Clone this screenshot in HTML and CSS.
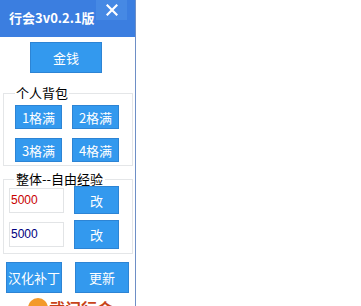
FILE: index.html
```html
<!DOCTYPE html>
<html>
<head>
<meta charset="utf-8">
<link rel="stylesheet" href="styles.css">
</head>
<body>
<div class="window">
  <div class="titlebar">
    <span class="title">行会3v0.2.1版</span>
    <span class="close"><svg width="12" height="12" viewBox="0 0 12 12"><path d="M1.5 1.5 L10.5 10.5 M10.5 1.5 L1.5 10.5" stroke="#ffffff" stroke-width="2.2" stroke-linecap="square"/></svg></span>
  </div>
  <div class="body">
    <div class="row-money"><button class="btn money">金钱</button></div>
    <fieldset class="group g1">
      <legend>个人背包</legend>
      <div class="grid">
        <button class="btn cell">1格满</button>
        <button class="btn cell">2格满</button>
        <button class="btn cell">3格满</button>
        <button class="btn cell">4格满</button>
      </div>
    </fieldset>
    <fieldset class="group g2">
      <legend>整体--自由经验</legend>
      <div class="exp-row">
        <div class="input red">5000</div>
        <button class="btn edit">改</button>
      </div>
      <div class="exp-row">
        <div class="input navy">5000</div>
        <button class="btn edit">改</button>
      </div>
    </fieldset>
    <div class="bottom">
      <button class="btn big patch">汉化补丁</button>
      <button class="btn big update">更新</button>
    </div>
    <div class="logo">
      <span class="sun"></span>
      <span class="logo-text">武门行会</span>
    </div>
  </div>
</div>
</body>
</html>
```

FILE: styles.css
```css
html, body {
  margin: 0;
  padding: 0;
  background: #ffffff;
}
body {
  font-family: "Noto Sans CJK SC", "Noto Sans", sans-serif;
  font-size: 13px;
}
.window {
  width: 135px;
  height: 306px;
  border-right: 1px solid #6e8fc6;
  overflow: hidden;
  background: #ffffff;
}
.titlebar {
  height: 37px;
  background: #3b7ee0;
  position: relative;
}
.title {
  display: block;
  padding: 10px 0 0 9px;
  color: #ffffff;
  font-weight: bold;
  font-size: 13px;
  line-height: 16px;
}
.close {
  position: absolute;
  top: 0;
  left: 96px;
  width: 31px;
  height: 20px;
  background: #4689e4;
  display: flex;
  align-items: center;
  justify-content: center;
}
.close svg {
  display: block;
}
.btn {
  margin: 0;
  padding: 0;
  border: 1px solid #2d84d4;
  background: #3399ee;
  color: #ffffff;
  font-family: "Noto Sans CJK SC", "Noto Sans", sans-serif;
  font-size: 13px;
  line-height: 1;
  display: flex;
  align-items: center;
  justify-content: center;
}
.row-money {
  padding: 5px 0 0 30px;
}
.money {
  width: 72px;
  height: 31px;
}
.group {
  margin: 0 0 0 3px;
  width: 130px;
  box-sizing: border-box;
  border: 1px solid #e4e6e8;
  min-width: 0;
}
.group legend {
  font-size: 13px;
  line-height: 14px;
  color: #000000;
}
.g1 {
  margin-top: 13px;
  padding: 5px 0 3px 11px;
}
.g1 legend {
  padding: 0 1px;
  margin-left: 0;
}
.grid {
  display: grid;
  grid-template-columns: 47px 47px;
  grid-auto-rows: 24px;
  column-gap: 10px;
  row-gap: 9px;
}
.g2 {
  margin-top: 6px;
  padding: 0 0 4px 5px;
}
.g2 legend {
  padding: 0 2px;
  margin-left: 5px;
}
.exp-row {
  display: flex;
  align-items: center;
  height: 28px;
  margin-bottom: 6px;
}
.exp-row:last-child {
  margin-bottom: 0;
  height: 29px;
}
.input {
  width: 55px;
  height: 25px;
  box-sizing: border-box;
  border: 1px solid #e2e4e6;
  font-family: "Liberation Sans", Arial, sans-serif;
  font-size: 12px;
  line-height: 23px;
  padding-left: 1px;
  background: #ffffff;
}
.red { color: #c80000; }
.navy { color: #000080; }
.edit {
  margin-left: 10px;
  width: 45px;
  height: 100%;
}
.bottom {
  display: flex;
  padding: 8px 0 0 6px;
}
.big {
  height: 31px;
}
.patch {
  width: 56px;
}
.update {
  width: 54px;
  margin-left: 13px;
}
.logo {
  display: flex;
  align-items: flex-start;
  padding: 4px 0 0 28px;
}
.sun {
  width: 20px;
  height: 20px;
  border-radius: 50%;
  background: #f39a2a;
  margin-top: 1px;
}
.logo-text {
  margin-left: 1px;
  color: #c8441a;
  font-weight: bold;
  font-size: 16px;
  line-height: 16px;
  margin-top: 3px;
}
```
